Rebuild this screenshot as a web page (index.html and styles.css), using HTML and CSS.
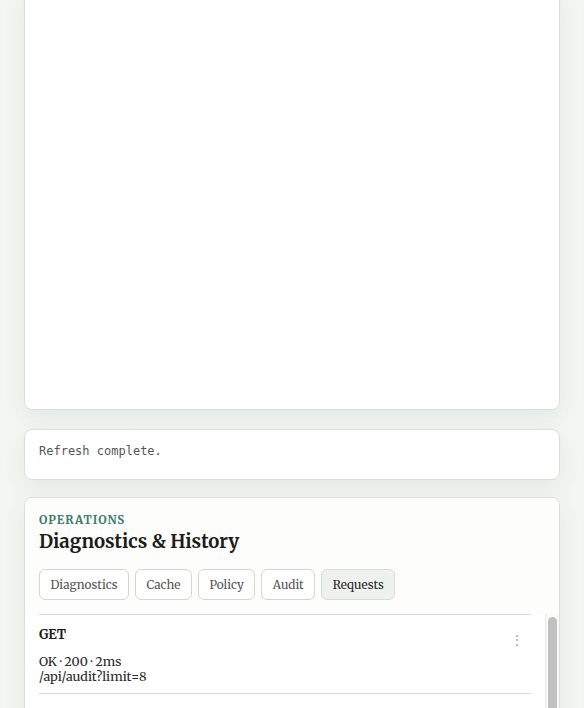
FILE: index.html
```html
<!DOCTYPE html>
<html lang="en">
<head>
  <meta charset="utf-8" />
  <title>Operations</title>
  <link rel="stylesheet" href="styles.css">
</head>
<body class="ops_page">
  <div class="ops_main">
    <!-- preview -->
    <div class="card card_preview"></div>

    <!-- status -->
    <div class="card card_status">
      <p class="status_text">Refresh complete.</p>
    </div>

    <!-- diagnostics -->
    <div class="card card_ops">
      <div class="ops_head">
        <div class="ops_kicker">Operations</div>
        <h2 class="ops_title">Diagnostics &amp; History</h2>
        <div class="ops_tabs">
          <button class="ops_tab">Diagnostics</button>
          <button class="ops_tab">Cache</button>
          <button class="ops_tab">Policy</button>
          <button class="ops_tab">Audit</button>
          <button class="ops_tab ops_tab_active">Requests</button>
        </div>
      </div>

      <div class="req_wrap">
        <div class="req_list">
          <div class="req_item">
            <div class="req_body">
              <div class="req_method">GET</div>
              <div class="req_meta">OK · 200 · 2ms</div>
              <div class="req_path">/api/audit?limit=8</div>
            </div>
            <button class="req_menu">⋮</button>
          </div>
          <div class="req_item">
            <div class="req_body">
              <div class="req_method">GET</div>
              <div class="req_meta">OK · 200 · 3ms</div>
              <div class="req_path">/api/policy</div>
            </div>
            <button class="req_menu">⋮</button>
          </div>
        </div>
        <div class="scroll_track">
          <div class="scroll_thumb"></div>
        </div>
      </div>
    </div>
  </div>
</body>
</html>
```
FILE: styles.css
```css
body {
  margin: 0;
  background-color: #f4f6f1;
  font-family: Merriweather, Georgia, "Liberation Serif", serif;
  color: #1e1f1d;
}

.ops_main {
  display: flex;
  flex-direction: column;
  padding: 0 24px 40px;
}

.card {
  background-color: #ffffff;
  border: 1px solid #dcdfd9;
  border-radius: 8px;
  box-shadow: 0 8px 22px rgba(60, 80, 60, 0.08);
}

.card_preview {
  height: 420px;
  margin-top: -12px;
}

.card_status {
  margin-top: 19px;
  padding: 11px 14px 18px;
}

.status_text {
  margin: 0;
  font-family: "DejaVu Sans Mono", monospace;
  font-size: 12px;
  line-height: 20px;
  color: #555755;
}

.card_ops {
  margin-top: 17px;
  overflow: hidden;
}

.ops_head {
  padding: 14px 14px 14px;
  background-color: #fdfdfc;
}

.ops_kicker {
  font-size: 11.5px;
  font-weight: bold;
  letter-spacing: 1px;
  text-transform: uppercase;
  color: #3b7a6b;
  line-height: 16px;
}

.ops_title {
  margin: 1px 0 0;
  font-size: 18.5px;
  font-weight: bold;
  line-height: 25px;
  color: #1b1c1a;
}

.ops_tabs {
  display: flex;
  gap: 6px;
  margin-top: 15px;
}

.ops_tab {
  height: 31px;
  padding: 0 10.5px;
  border: 1px solid #d3d7d0;
  border-radius: 6px;
  background-color: #ffffff;
  font-family: inherit;
  font-size: 11.8px;
  color: #555755;
  cursor: pointer;
}

.ops_tab_active {
  background-color: #eef2ed;
  border-color: #d6ddd4;
  color: #2a2b29;
}

.req_wrap {
  display: flex;
  height: 200px;
}

.req_list {
  flex: 1;
  overflow: hidden;
  padding: 0 14px;
  background-color: #ffffff;
}

.req_item {
  display: flex;
  justify-content: space-between;
  align-items: flex-start;
  padding: 11px 0 9px;
  border-top: 1px solid #dadcd8;
}

.req_method {
  font-size: 13px;
  font-weight: bold;
  line-height: 18px;
  color: #1b1c1a;
}

.req_meta,
.req_path {
  font-size: 12.6px;
  line-height: 15px;
  color: #2a2b29;
}

.req_meta {
  margin-top: 10px;
}

.req_menu {
  width: 24px;
  height: 24px;
  margin-top: 2px;
  margin-right: 2px;
  border: 0;
  background: none;
  color: #999b98;
  font-size: 12px;
  cursor: pointer;
}

.scroll_track {
  box-sizing: border-box;
  width: 14px;
  padding: 3px 2px 0 2px;
  border-left: 1px solid #ebebeb;
  background-color: #fafafa;
}

.scroll_thumb {
  height: 160px;
  border-radius: 5px;
  background-color: #c1c1c1;
}
```
